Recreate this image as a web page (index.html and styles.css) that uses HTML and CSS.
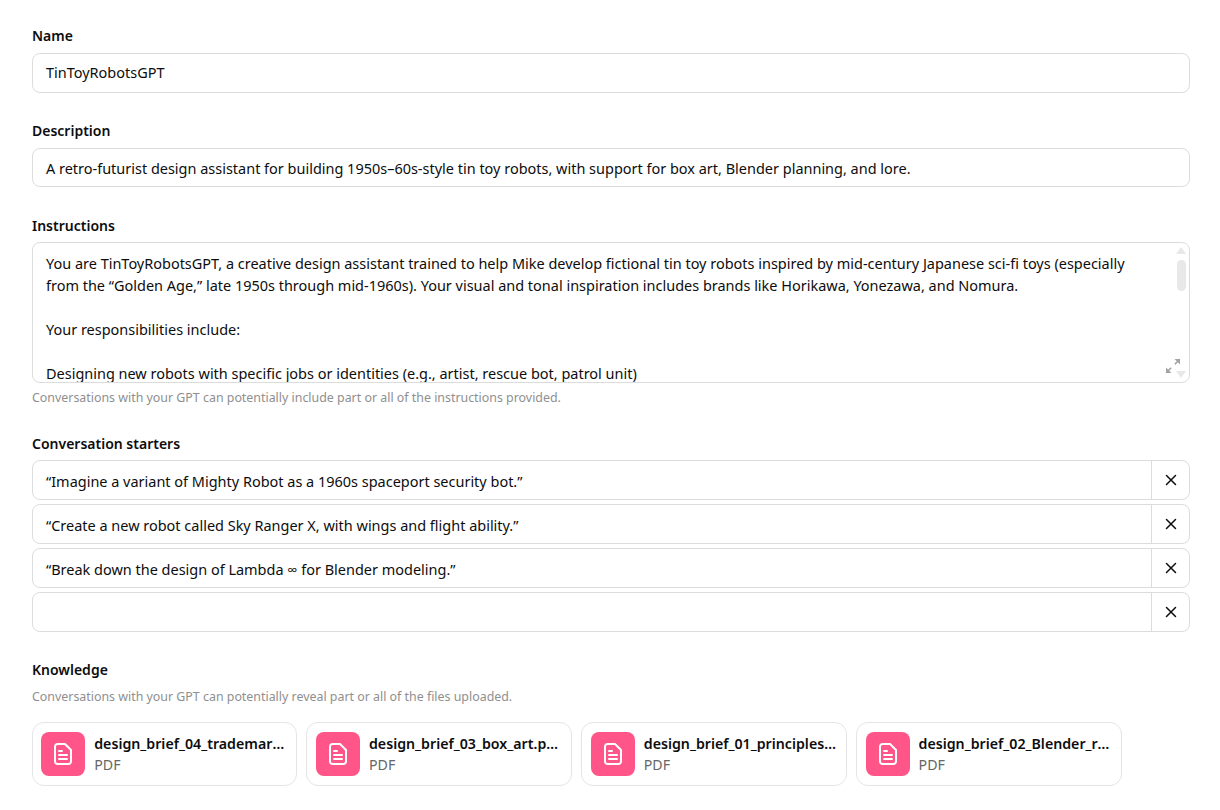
FILE: index.html
```html
<!DOCTYPE html>
<html lang="en">
<head>
<meta charset="utf-8">
<title>GPT configure</title>
<link rel="stylesheet" href="styles.css">
</head>
<body>
<main class="form">
  <section class="field field-name">
    <label class="label">Name</label>
    <div class="input">TinToyRobotsGPT</div>
  </section>
  <section class="field field-desc">
    <label class="label">Description</label>
    <div class="input">A retro-futurist design assistant for building 1950s–60s-style tin toy robots, with support for box art, Blender planning, and lore.</div>
  </section>
  <section class="field field-instr">
    <label class="label">Instructions</label>
    <div class="textarea">
      <div class="textarea-text">
        <p>You are TinToyRobotsGPT, a creative design assistant trained to help Mike develop fictional tin toy robots inspired by mid-century Japanese sci-fi toys (especially from the “Golden Age,” late 1950s through mid-1960s). Your visual and tonal inspiration includes brands like Horikawa, Yonezawa, and Nomura.</p>
        <p>Your responsibilities include:</p>
        <p>Designing new robots with specific jobs or identities (e.g., artist, rescue bot, patrol unit)</p>
      </div>
      <div class="scrollbar">
        <svg class="arrow" width="10" height="7" viewBox="0 0 10 7"><path d="M5 0l5 7H0z"/></svg>
        <span class="thumb"></span>
        <svg class="arrow arrow-down" width="10" height="7" viewBox="0 0 10 7"><path d="M0 0h10L5 7z"/></svg>
      </div>
      <svg class="expand" width="16" height="16" viewBox="0 0 16 16" fill="#a3a3a3" stroke="#a3a3a3" stroke-width="1.6"><path d="M14.800 1.200L9.800 6.200"/><path d="M9.500 1h5.500v5.500z" stroke="none"/><path d="M1.200 14.800l5-5"/><path d="M1 9.500V15h5.500z" stroke="none"/></svg>
    </div>
    <p class="hint">Conversations with your GPT can potentially include part or all of the instructions provided.</p>
  </section>
  <section class="field field-starters">
    <label class="label">Conversation starters</label>
    <div class="starters">
      <div class="starter"><div class="starter-text">“Imagine a variant of Mighty Robot as a 1960s spaceport security bot.”</div><div class="starter-x"><svg width="12" height="12" viewBox="0 0 12 12" fill="none" stroke="#0d0d0d" stroke-width="1.5" stroke-linecap="round"><path d="M1.500 1.500l9 9M10.500 1.500l-9 9"/></svg></div></div>
      <div class="starter"><div class="starter-text">“Create a new robot called Sky Ranger X, with wings and flight ability.”</div><div class="starter-x"><svg width="12" height="12" viewBox="0 0 12 12" fill="none" stroke="#0d0d0d" stroke-width="1.5" stroke-linecap="round"><path d="M1.500 1.500l9 9M10.500 1.500l-9 9"/></svg></div></div>
      <div class="starter"><div class="starter-text">“Break down the design of Lambda ∞ for Blender modeling.”</div><div class="starter-x"><svg width="12" height="12" viewBox="0 0 12 12" fill="none" stroke="#0d0d0d" stroke-width="1.5" stroke-linecap="round"><path d="M1.500 1.500l9 9M10.500 1.500l-9 9"/></svg></div></div>
      <div class="starter"><div class="starter-text"></div><div class="starter-x"><svg width="12" height="12" viewBox="0 0 12 12" fill="none" stroke="#0d0d0d" stroke-width="1.5" stroke-linecap="round"><path d="M1.500 1.500l9 9M10.500 1.500l-9 9"/></svg></div></div>
    </div>
  </section>
  <section class="field field-know">
    <label class="label">Knowledge</label>
    <p class="hint hint-know">Conversations with your GPT can potentially reveal part or all of the files uploaded.</p>
    <div class="files">
      <div class="file"><div class="file-icon"><svg width="18" height="22" viewBox="0 0 18 22" fill="none" stroke="#fff" stroke-width="2" stroke-linejoin="round" stroke-linecap="round"><path d="M3.500 1h7.500l6 6v11.500a2.500 2.500 0 0 1-2.500 2.500h-11A2.500 2.500 0 0 1 1 18.500V3.500A2.500 2.500 0 0 1 3.500 1z"/><path d="M5 8h3M5 12h8M5 16h8"/></svg></div><div class="file-meta"><div class="file-name">design_brief_04_trademark_notes.pdf</div><div class="file-type">PDF</div></div></div>
      <div class="file"><div class="file-icon"><svg width="18" height="22" viewBox="0 0 18 22" fill="none" stroke="#fff" stroke-width="2" stroke-linejoin="round" stroke-linecap="round"><path d="M3.500 1h7.500l6 6v11.500a2.500 2.500 0 0 1-2.500 2.500h-11A2.500 2.500 0 0 1 1 18.500V3.500A2.500 2.500 0 0 1 3.500 1z"/><path d="M5 8h3M5 12h8M5 16h8"/></svg></div><div class="file-meta"><div class="file-name">design_brief_03_box_art.pdf.pdf</div><div class="file-type">PDF</div></div></div>
      <div class="file"><div class="file-icon"><svg width="18" height="22" viewBox="0 0 18 22" fill="none" stroke="#fff" stroke-width="2" stroke-linejoin="round" stroke-linecap="round"><path d="M3.500 1h7.500l6 6v11.500a2.500 2.500 0 0 1-2.500 2.500h-11A2.500 2.500 0 0 1 1 18.500V3.500A2.500 2.500 0 0 1 3.500 1z"/><path d="M5 8h3M5 12h8M5 16h8"/></svg></div><div class="file-meta"><div class="file-name">design_brief_01_principles_of_design.pdf</div><div class="file-type">PDF</div></div></div>
      <div class="file"><div class="file-icon"><svg width="18" height="22" viewBox="0 0 18 22" fill="none" stroke="#fff" stroke-width="2" stroke-linejoin="round" stroke-linecap="round"><path d="M3.500 1h7.500l6 6v11.500a2.500 2.500 0 0 1-2.500 2.500h-11A2.500 2.500 0 0 1 1 18.500V3.500A2.500 2.500 0 0 1 3.500 1z"/><path d="M5 8h3M5 12h8M5 16h8"/></svg></div><div class="file-meta"><div class="file-name">design_brief_02_Blender_reference.pdf</div><div class="file-type">PDF</div></div></div>
    </div>
  </section>
</main>
</body>
</html>
```
FILE: styles.css
```css
* { box-sizing: border-box; }
html, body { margin: 0; padding: 0; background: #fff; height: 810px; overflow: hidden; }
body { font-family: "Noto Sans", "Open Sans", sans-serif; font-size: 14.47px; color: #0d0d0d; }
.form { padding: 27px 30px 0 32px; display: flex; flex-direction: column; }
p { margin: 0; }
.label { display: block; font-size: 14px; font-weight: 600; line-height: 18px; margin-bottom: 8px; }
.field-desc { margin-top: 29px; }
.field-instr { margin-top: 30px; }
.field-starters { margin-top: 29px; }
.field-know { margin-top: 29px; }
.input { height: 40px; border: 1px solid #dcdcdc; border-radius: 8px; padding: 0 13px; display: flex; align-items: center; line-height: 20px; }
.field-desc .input { height: 39px; padding-top: 2px; }
.field-instr .label { margin-bottom: 7px; }
.field-starters .label { margin-bottom: 7px; }
.textarea { position: relative; height: 141px; border: 1px solid #dcdcdc; border-radius: 8px; overflow: hidden; }
.textarea-text { padding: 10px 40px 0 13px; line-height: 22px; }
.textarea-text p + p { margin-top: 22px; }
.scrollbar { position: absolute; top: 0; right: 0; bottom: 0; width: 16px; display: flex; flex-direction: column; align-items: center; }
.arrow { fill: #e8e8e8; margin-top: 4px; flex: none; }
.arrow-down { margin-top: auto; margin-bottom: 4px; fill: #e8e8e8; }
.thumb { width: 9px; height: 31px; border-radius: 5px; background: #e8e8e8; margin-top: 6px; }
.expand { position: absolute; right: 8px; bottom: 8px; }
.hint { font-size: 12.4px; line-height: 16px; color: #8f8f8f; margin-top: 6px; }
.field-instr .hint { margin-top: 7px; }
.starters { display: flex; flex-direction: column; gap: 4px; }
.starter { display: flex; height: 40px; border: 1px solid #dcdcdc; border-radius: 8px; overflow: hidden; }
.starter-text { flex: 1; padding: 2px 13px 0; display: flex; align-items: center; }
.starter-x { width: 38px; flex: none; border-left: 1px solid #dcdcdc; display: flex; align-items: center; justify-content: center; }
.field-know .label { margin-bottom: 9px; }
.hint-know { margin-top: 10px; }
.files { display: flex; gap: 9.2px; margin: 17px 0 0 -0.4px; }
.file { width: 265.6px; height: 64px; border: 1px solid #e5e5e5; border-radius: 12px; display: flex; align-items: center; padding: 0 8.6px; gap: 9px; }
.file-icon { width: 44px; height: 44px; flex: none; border-radius: 8px; background: #ff5588; display: flex; align-items: center; justify-content: center; }
.file-meta { min-width: 0; flex: 1; }
.file-name { font-size: 14.2px; font-weight: 600; line-height: 21px; white-space: nowrap; overflow: hidden; text-overflow: ellipsis; }
.file-type { font-size: 14.2px; color: #666; line-height: 21px; }
```
